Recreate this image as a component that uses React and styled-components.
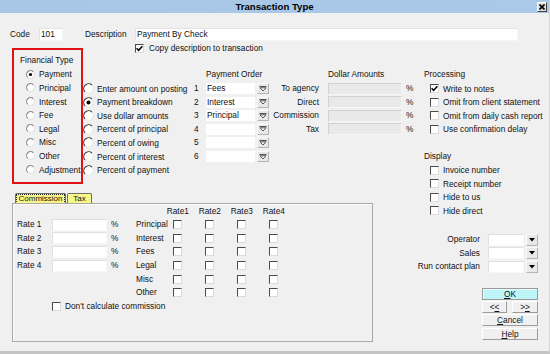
import React from 'react';
import styled, { createGlobalStyle } from 'styled-components';

const ROW = 13.6;
const FONT = `"Liberation Sans", Arial, sans-serif`;

const Global = createGlobalStyle`
  html, body { margin: 0; padding: 0; background: #f0f0f0; }
  body { font-family: ${FONT}; font-size: 8.3px; color: #111; }
  * { box-sizing: border-box; }
`;

const Window = styled.div`
  width: 550px;
  height: 354px;
  background: #f0f0f0;
  display: flex;
  flex-direction: column;
  border-right: 1px solid #d4d4d4;
  border-bottom: 3px solid #c4c4c4;
  overflow: hidden;
`;

const TitleBar = styled.div`
  height: 13px;
  flex: none;
  display: grid;
  grid-template-columns: 1fr auto 1fr;
  align-items: center;
  background: linear-gradient(to right, #a8c7e6, #aac9e9);
`;

const Title = styled.div`
  grid-column: 2;
  font-weight: bold;
  font-size: 9.6px;
  color: #000;
  line-height: 13px;
`;

const CloseBtn = styled.div`
  grid-column: 3;
  justify-self: end;
  margin-right: 2px;
  width: 10px;
  height: 10px;
  display: flex;
  align-items: center;
  justify-content: center;
  background: #dedede;
  border: 1px solid;
  border-color: #fff #404040 #404040 #fff;
`;

const Body = styled.div`
  flex: 1;
  display: flex;
  flex-direction: column;
  padding: 15px 11px 0 10px;
`;

const CodeRow = styled.div`
  display: flex;
  align-items: center;
  height: 13px;
`;

const Label = styled.span`
  display: inline-block;
  white-space: nowrap;
  width: ${p => (p.$w ? `${p.$w}px` : 'auto')};
  margin-left: ${p => p.$ml || 0}px;
  text-align: ${p => p.$align || 'left'};
  line-height: 11px;
`;

const TextBox = styled.div`
  width: ${p => p.$w}px;
  height: ${p => p.$h || 13}px;
  background: #fff;
  border: 1px solid;
  border-color: #e2e2e2 #f6f6f6 #f6f6f6 #e2e2e2;
  padding-left: 1px;
  line-height: ${p => (p.$h || 13) - 2}px;
  white-space: nowrap;
  overflow: hidden;
`;

const Main = styled.div`
  display: flex;
  align-items: flex-start;
  margin-top: 1px;
`;

const LeftArea = styled.div`
  margin-left: 2px;
  width: 400px;
  display: flex;
  flex-direction: column;
`;

const TopGroups = styled.div`
  display: flex;
  align-items: flex-start;
`;

const FinBox = styled.div`
  margin-top: 6px;
  width: 71px;
  height: 136px;
  border: 2px solid #e31212;
  padding: 4px 0 0 6px;
  display: grid;
  grid-auto-rows: ${ROW}px;
  align-items: center;
`;

const OptionRow = styled.div`
  display: flex;
  align-items: center;
  gap: ${p => p.$gap ?? 4}px;
  padding-left: ${p => p.$indent || 0}px;
  white-space: nowrap;
  grid-column: ${p => p.$col || 'auto'};
  grid-row: ${p => p.$row || 'auto'};
`;

const RestColumn = styled.div`
  width: 329px;
  display: flex;
  flex-direction: column;
`;

const CopyRow = styled.div`
  height: 12px;
  padding-left: 52px;
  display: flex;
  align-items: center;
  gap: 5px;
  margin-bottom: 14.2px;
  white-space: nowrap;
`;

const GroupGrid = styled.div`
  display: grid;
  grid-template-columns: 110px 13px 63px 50px 9px 74px 15px;
  grid-template-rows: repeat(8, ${ROW}px);
  align-items: center;
`;

const Cell = styled.div`
  grid-column: ${p => p.$col};
  grid-row: ${p => p.$row};
  text-align: ${p => p.$align || 'left'};
  padding-left: ${p => p.$pl || 0}px;
  white-space: nowrap;
  line-height: 11px;
`;

const SelectWrap = styled.div`
  grid-column: ${p => p.$col || 'auto'};
  grid-row: ${p => p.$row || 'auto'};
  display: flex;
  align-items: center;
  gap: 2px;
`;

const SelectField = styled.div`
  width: ${p => p.$w}px;
  height: ${p => p.$h}px;
  background: #fff;
  padding-left: 1px;
  line-height: ${p => p.$h}px;
  white-space: nowrap;
  overflow: hidden;
`;

const DropBtn = styled.div`
  width: 12px;
  height: ${p => p.$h}px;
  background: #e8e8e8;
  border: 1px solid;
  border-color: #fbfbfb #b4b4b4 #b4b4b4 #fbfbfb;
  display: flex;
  align-items: center;
  justify-content: center;
`;

const DollarBox = styled.div`
  grid-column: 6;
  grid-row: ${p => p.$row};
  height: 12px;
  background: #e9e9e9;
  border: 1px solid;
  border-color: #d2d2d2 #f6f6f6 #f6f6f6 #d2d2d2;
`;

const RightColumn = styled.div`
  width: 126px;
  display: flex;
  flex-direction: column;
  padding-top: 26.2px;
`;

const ProcList = styled.div`
  display: grid;
  grid-template-rows: repeat(11, ${ROW}px);
  align-items: center;
  padding-left: 12px;
`;

const ComboList = styled.div`
  margin-top: 16.2px;
  display: grid;
  grid-template-columns: 1fr 36px 2px 12px;
  grid-auto-rows: 12px;
  row-gap: 1.4px;
  align-items: center;
`;

const ComboLabel = styled.div`
  text-align: right;
  padding-right: 8px;
  white-space: nowrap;
  line-height: 11px;
`;

const ComboField = styled.div`
  grid-column: 2;
  height: 12px;
  background: #fff;
  border: 1px solid;
  border-color: #e0e0e0 #f8f8f8 #f8f8f8 #e0e0e0;
`;

const ComboBtn = styled(DropBtn)`
  grid-column: 4;
`;

const ButtonStack = styled.div`
  margin-top: 15.2px;
  align-self: flex-end;
  width: 56px;
  display: flex;
  flex-direction: column;
  gap: 1.3px;
`;

const NavRow = styled.div`
  display: flex;
  justify-content: space-between;
`;

const Btn = styled.div`
  width: ${p => (p.$w ? `${p.$w}px` : '100%')};
  height: 12px;
  display: flex;
  align-items: center;
  justify-content: center;
  background: ${p => (p.$primary ? '#bdf4f8' : '#f0f0f0')};
  border: 1px solid;
  border-color: ${p => (p.$primary ? '#9a9a9a' : '#ffffff #9c9c9c #9c9c9c #ffffff')};
  box-shadow: ${p => (p.$primary ? 'inset 1px 1px 0 #e6fcfd' : 'none')};
  line-height: 10px;
  color: #111;
`;

const TabsSection = styled.div`
  margin-top: 9px;
  display: flex;
  flex-direction: column;
`;

const TabStrip = styled.div`
  display: flex;
  align-items: flex-end;
  gap: 1px;
  padding-left: 3px;
  height: 10px;
`;

const Tab = styled.div`
  width: ${p => p.$w}px;
  height: 10px;
  background: #f7f788;
  border: 1px solid #6e6e6e;
  border-bottom: none;
  border-radius: 2px 2px 0 0;
  display: flex;
  align-items: center;
  justify-content: center;
  font-size: 8px;
  line-height: 8px;
`;

const FocusText = styled.span`
  outline: 1px dotted #222;
  outline-offset: 0;
  padding: 0 1px;
`;

const Panel = styled.div`
  width: 361px;
  height: 139px;
  border: 1px solid #a9a9a9;
  box-shadow: inset 1px 1px 0 #fbfbfb;
  padding-left: 4px;
  display: grid;
  grid-template-columns: 35px 55px 29px 37.3px repeat(4, 32px);
  grid-template-rows: 14px repeat(7, ${ROW}px);
  align-items: center;
`;

const RateInput = styled.div`
  grid-column: 2;
  grid-row: ${p => p.$row};
  height: 12px;
  background: #fff;
  border: 1px solid;
  border-color: #e0e0e0 #f8f8f8 #f8f8f8 #e0e0e0;
`;

const ColHead = styled.div`
  grid-column: ${p => p.$col};
  grid-row: 1;
  width: 9px;
  display: flex;
  justify-content: center;
  white-space: nowrap;
  line-height: 11px;
`;

const CheckSlot = styled.div`
  grid-column: ${p => p.$col};
  grid-row: ${p => p.$row};
  display: flex;
  align-items: center;
`;

const CheckBoxBox = styled.span`
  flex: none;
  width: 9px;
  height: 9px;
  background: #fff;
  border: 1px solid;
  border-color: #4a4a4a #dcdcdc #dcdcdc #4a4a4a;
  display: flex;
  align-items: center;
  justify-content: center;
`;

function CheckBox({ checked }) {
  return (
    <CheckBoxBox>
      {checked && (
        <svg width="7" height="7" viewBox="0 0 7 7">
          <path d="M0.6 3.2 L2.6 5.3 L6.4 1.2" stroke="#000" strokeWidth="1.5" fill="none" />
        </svg>
      )}
    </CheckBoxBox>
  );
}

function Radio({ size, checked, dark }) {
  const c = size / 2;
  const r = size / 2 - 0.6;
  const d = r * Math.SQRT1_2;
  const bl = `${(c - d).toFixed(2)},${(c + d).toFixed(2)}`;
  const tr = `${(c + d).toFixed(2)},${(c - d).toFixed(2)}`;
  return (
    <svg width={size} height={size} viewBox={`0 0 ${size} ${size}`} style={{ flex: 'none' }}>
      <circle cx={c} cy={c} r={r} fill="#fff" />
      <path d={`M${tr} A${r},${r} 0 0 1 ${bl}`} stroke="#e4e4e4" strokeWidth="1.1" fill="none" />
      <path d={`M${bl} A${r},${r} 0 0 1 ${tr}`} stroke={dark ? '#2e2e2e' : '#8c8c8c'} strokeWidth="1.1" fill="none" />
      {checked && <circle cx={c} cy={c} r={size * 0.18} fill="#000" />}
    </svg>
  );
}

function OutlineArrow() {
  return (
    <svg width="8" height="6" viewBox="0 0 8 6">
      <path d="M0.5 0.5 H7.5" stroke="#555" strokeWidth="1" />
      <path d="M1 1.8 L7 1.8 L4 5 Z" fill="#fff" stroke="#444" strokeWidth="0.9" />
    </svg>
  );
}

function SolidArrow() {
  return (
    <svg width="6" height="4" viewBox="0 0 6 4">
      <path d="M0 0 H6 L3 3.5 Z" fill="#000" />
    </svg>
  );
}

const financialTypes = ['Payment', 'Principal', 'Interest', 'Fee', 'Legal', 'Misc', 'Other', 'Adjustment'];
const methods = [
  'Enter amount on posting',
  'Payment breakdown',
  'Use dollar amounts',
  'Percent of principal',
  'Percent of owing',
  'Percent of interest',
  'Percent of payment',
];
const orders = ['Fees', 'Interest', 'Principal', '', '', ''];
const dollars = ['To agency', 'Direct', 'Commission', 'Tax'];
const processing = [
  { t: 'Write to notes', c: true },
  { t: 'Omit from client statement' },
  { t: 'Omit from daily cash report' },
  { t: 'Use confirmation delay' },
];
const display = ['Invoice number', 'Receipt number', 'Hide to us', 'Hide direct'];
const combos = ['Operator', 'Sales', 'Run contact plan'];
const matrixRows = ['Principal', 'Interest', 'Fees', 'Legal', 'Misc', 'Other'];

export default function App() {
  return (
    <>
      <Global />
      <Window>
        <TitleBar>
          <Title>Transaction Type</Title>
          <CloseBtn>
            <svg width="6" height="6" viewBox="0 0 6 6">
              <path d="M0.5 0.5 L5.5 5.5 M5.5 0.5 L0.5 5.5" stroke="#000" strokeWidth="1.6" />
            </svg>
          </CloseBtn>
        </TitleBar>
        <Body>
          <CodeRow>
            <Label $w={29}>Code</Label>
            <TextBox $w={24}>101</TextBox>
            <Label $w={50} $ml={22}>Description</Label>
            <TextBox $w={383}>Payment By Check</TextBox>
          </CodeRow>
          <Main>
            <LeftArea>
              <TopGroups>
                <FinBox>
                  <Label>Financial Type</Label>
                  {financialTypes.map((t, i) => (
                    <OptionRow key={t} $indent={6}>
                      <Radio size={9} checked={i === 0} />
                      <span>{t}</span>
                    </OptionRow>
                  ))}
                </FinBox>
                <RestColumn>
                  <CopyRow>
                    <CheckBox checked />
                    <span>Copy description to transaction</span>
                  </CopyRow>
                  <GroupGrid>
                    <Cell $col="3 / span 2" $row={1}>Payment Order</Cell>
                    <Cell $col="6 / span 2" $row={1}>Dollar Amounts</Cell>
                    {methods.map((m, i) => (
                      <OptionRow key={m} $col={1} $row={i + 2} $gap={3}>
                        <Radio size={11} checked={i === 1} dark />
                        <span>{m}</span>
                      </OptionRow>
                    ))}
                    {orders.map((o, i) => (
                      <React.Fragment key={i}>
                        <Cell $col={2} $row={i + 2} $pl={1}>{i + 1}</Cell>
                        <SelectWrap $col={3} $row={i + 2}>
                          <SelectField $w={49} $h={11}>{o}</SelectField>
                          <DropBtn $h={11}>
                            <OutlineArrow />
                          </DropBtn>
                        </SelectWrap>
                      </React.Fragment>
                    ))}
                    {dollars.map((d, i) => (
                      <React.Fragment key={d}>
                        <Cell $col={4} $row={i + 2} $align="right">{d}</Cell>
                        <DollarBox $row={i + 2} />
                        <Cell $col={7} $row={i + 2} $pl={4}>%</Cell>
                      </React.Fragment>
                    ))}
                  </GroupGrid>
                </RestColumn>
              </TopGroups>
              <TabsSection>
                <TabStrip>
                  <Tab $w={51}>
                    <FocusText>Commission</FocusText>
                  </Tab>
                  <Tab $w={25}>Tax</Tab>
                </TabStrip>
                <Panel>
                  {[1, 2, 3, 4].map((n, i) => (
                    <ColHead key={n} $col={5 + i}>
                      <span>Rate{n}</span>
                    </ColHead>
                  ))}
                  {[1, 2, 3, 4].map((n, i) => (
                    <React.Fragment key={n}>
                      <Cell $col={1} $row={i + 2}>Rate {n}</Cell>
                      <RateInput $row={i + 2} />
                      <Cell $col={3} $row={i + 2} $pl={4}>%</Cell>
                    </React.Fragment>
                  ))}
                  {matrixRows.map((r, i) => (
                    <React.Fragment key={r}>
                      <Cell $col={4} $row={i + 2}>{r}</Cell>
                      {[0, 1, 2, 3].map(c => (
                        <CheckSlot key={c} $col={5 + c} $row={i + 2}>
                          <CheckBox />
                        </CheckSlot>
                      ))}
                    </React.Fragment>
                  ))}
                  <OptionRow $col="2 / span 7" $row={8} $gap={4}>
                    <CheckBox />
                    <span>Don't calculate commission</span>
                  </OptionRow>
                </Panel>
              </TabsSection>
            </LeftArea>
            <RightColumn>
              <ProcList>
                <Label>Processing</Label>
                {processing.map(p => (
                  <OptionRow key={p.t} $indent={6}>
                    <CheckBox checked={p.c} />
                    <span>{p.t}</span>
                  </OptionRow>
                ))}
                <span />
                <Label>Display</Label>
                {display.map(d => (
                  <OptionRow key={d} $indent={6}>
                    <CheckBox />
                    <span>{d}</span>
                  </OptionRow>
                ))}
              </ProcList>
              <ComboList>
                {combos.map(c => (
                  <React.Fragment key={c}>
                    <ComboLabel>{c}</ComboLabel>
                    <ComboField />
                    <ComboBtn $h={12}>
                      <SolidArrow />
                    </ComboBtn>
                  </React.Fragment>
                ))}
              </ComboList>
              <ButtonStack>
                <Btn $primary>
                  <span><u>O</u>K</span>
                </Btn>
                <NavRow>
                  <Btn $w={25}>
                    <span>&lt;<u>&lt;</u></span>
                  </Btn>
                  <Btn $w={26}>
                    <span>&gt;<u>&gt;</u></span>
                  </Btn>
                </NavRow>
                <Btn>
                  <span><u>C</u>ancel</span>
                </Btn>
                <Btn>
                  <span><u>H</u>elp</span>
                </Btn>
              </ButtonStack>
            </RightColumn>
          </Main>
        </Body>
      </Window>
    </>
  );
}
